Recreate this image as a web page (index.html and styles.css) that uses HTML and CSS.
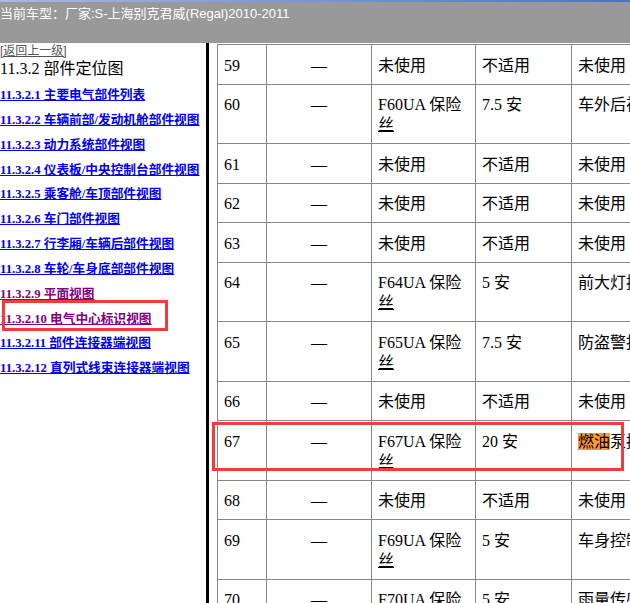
FILE: index.html
```html
<!DOCTYPE html>
<html lang="zh-CN">
<head>
    <meta charset="UTF-8">
    <title>部件定位图</title>
    <link rel="stylesheet" href="styles.css">
</head>
<body>
    <header class="top-bar">
        <div class="title-strip"></div>
        <div class="car-model">当前车型：厂家:S-上海别克君威(Regal)2010-2011</div>
    </header>

    <div class="main">
        <!-- left navigation -->
        <nav class="side">
            <a class="back-link" href="#">[返回上一级]</a>
            <div class="side-title">11.3.2 部件定位图</div>
            <ul class="toc">
                <li><a href="#">11.3.2.1 主要电气部件列表</a></li>
                <li><a href="#">11.3.2.2 车辆前部/发动机舱部件视图</a></li>
                <li><a href="#">11.3.2.3 动力系统部件视图</a></li>
                <li><a href="#">11.3.2.4 仪表板/中央控制台部件视图</a></li>
                <li><a href="#">11.3.2.5 乘客舱/车顶部件视图</a></li>
                <li><a href="#">11.3.2.6 车门部件视图</a></li>
                <li><a href="#">11.3.2.7 行李厢/车辆后部件视图</a></li>
                <li><a href="#">11.3.2.8 车轮/车身底部部件视图</a></li>
                <li><a class="visited" href="#">11.3.2.9 平面视图</a></li>
                <li><a class="visited" href="#">11.3.2.10 电气中心标识视图</a></li>
                <li><a href="#">11.3.2.11 部件连接器端视图</a></li>
                <li><a href="#">11.3.2.12 直列式线束连接器端视图</a></li>
            </ul>
        </nav>

        <div class="divider"></div>

        <!-- fuse table -->
        <div class="content">
            <table class="fuse-table">
                <colgroup>
                    <col class="c-no">
                    <col class="c-dash">
                    <col class="c-part">
                    <col class="c-amp">
                    <col class="c-desc">
                </colgroup>
                <tr><td>59</td><td class="dash">—</td><td>未使用</td><td>不适用</td><td>未使用</td></tr>
                <tr><td>60</td><td class="dash">—</td><td>F60UA 保险<u>丝</u></td><td>7.5 安</td><td>车外后视镜加热</td></tr>
                <tr><td>61</td><td class="dash">—</td><td>未使用</td><td>不适用</td><td>未使用</td></tr>
                <tr><td>62</td><td class="dash">—</td><td>未使用</td><td>不适用</td><td>未使用</td></tr>
                <tr><td>63</td><td class="dash">—</td><td>未使用</td><td>不适用</td><td>未使用</td></tr>
                <tr><td>64</td><td class="dash">—</td><td>F64UA 保险<u>丝</u></td><td>5 安</td><td>前大灯控制</td></tr>
                <tr><td>65</td><td class="dash">—</td><td>F65UA 保险<u>丝</u></td><td>7.5 安</td><td>防盗警报器</td></tr>
                <tr><td>66</td><td class="dash">—</td><td>未使用</td><td>不适用</td><td>未使用</td></tr>
                <tr><td>67</td><td class="dash">—</td><td>F67UA 保险<u>丝</u></td><td>20 安</td><td><span class="hit">燃油</span>泵控制模块</td></tr>
                <tr><td>68</td><td class="dash">—</td><td>未使用</td><td>不适用</td><td>未使用</td></tr>
                <tr><td>69</td><td class="dash">—</td><td>F69UA 保险<u>丝</u></td><td>5 安</td><td>车身控制模块</td></tr>
                <tr><td>70</td><td class="dash">—</td><td>F70UA 保险<u>丝</u></td><td>5 安</td><td>雨量传感器</td></tr>
            </table>
        </div>
    </div>

    <!-- red annotation boxes -->
    <div class="mark mark-nav"></div>
    <div class="mark mark-row"></div>
</body>
</html>
```

FILE: styles.css
```css
html, body {
    margin: 0;
    padding: 0;
    height: 603px;
    overflow: hidden;
    background: #fff;
}

body {
    font-family: "Liberation Serif", "Times New Roman", "Noto Sans CJK SC", serif;
    color: #000;
}

.top-bar {
    height: 43px;
    background: #999;
}

.title-strip {
    height: 2px;
    background: linear-gradient(to right, #a9b8dd, #4b70cf);
}

.car-model {
    padding-top: 3px;
    line-height: 18px;
    font-family: "Liberation Sans", Arial, "Noto Sans CJK SC", sans-serif;
    font-size: 13px;
    color: #fff;
    white-space: nowrap;
}

.main {
    display: flex;
    height: 560px;
}

.side {
    width: 206px;
    flex: none;
    overflow: hidden;
    background: #fff;
}

.back-link {
    display: block;
    margin-top: 1px;
    line-height: 14px;
    font-family: "Liberation Sans", Arial, "Noto Sans CJK SC", sans-serif;
    font-size: 12px;
    color: #555;
}

.side-title {
    line-height: 21px;
    font-size: 16px;
}

.toc {
    list-style: none;
    margin: 4px 0 0;
    padding: 0;
}

.toc li {
    height: 24.85px;
    line-height: 24.85px;
    font-size: 12.7px;
    font-weight: bold;
    white-space: nowrap;
}

.toc a {
    color: #0000ee;
}

.toc a.visited {
    color: #800080;
}

.divider {
    width: 3px;
    flex: none;
    background: #000;
}

.content {
    flex: 1;
    overflow: hidden;
    padding: 1px 0 0 8px;
}

.fuse-table {
    border-collapse: collapse;
    table-layout: fixed;
    width: 554px;
    font-size: 16px;
}

.c-no { width: 49px; }
.c-dash { width: 105px; }
.c-part { width: 104px; }
.c-amp { width: 96px; }
.c-desc { width: 200px; }

.fuse-table td {
    border: 1px solid #888;
    padding: 10.5px 6px 8px;
    line-height: 20px;
    vertical-align: top;
}

.fuse-table td.dash {
    text-align: center;
}

.fuse-table td:last-child {
    white-space: nowrap;
}

.hit {
    background: #ff9933;
}

.mark {
    position: absolute;
    border: 3px solid #f23c3c;
    box-sizing: border-box;
}

.mark-nav {
    left: 2px;
    top: 300px;
    width: 166px;
    height: 31px;
}

.mark-row {
    left: 212px;
    top: 422px;
    width: 412px;
    height: 49px;
}
```
